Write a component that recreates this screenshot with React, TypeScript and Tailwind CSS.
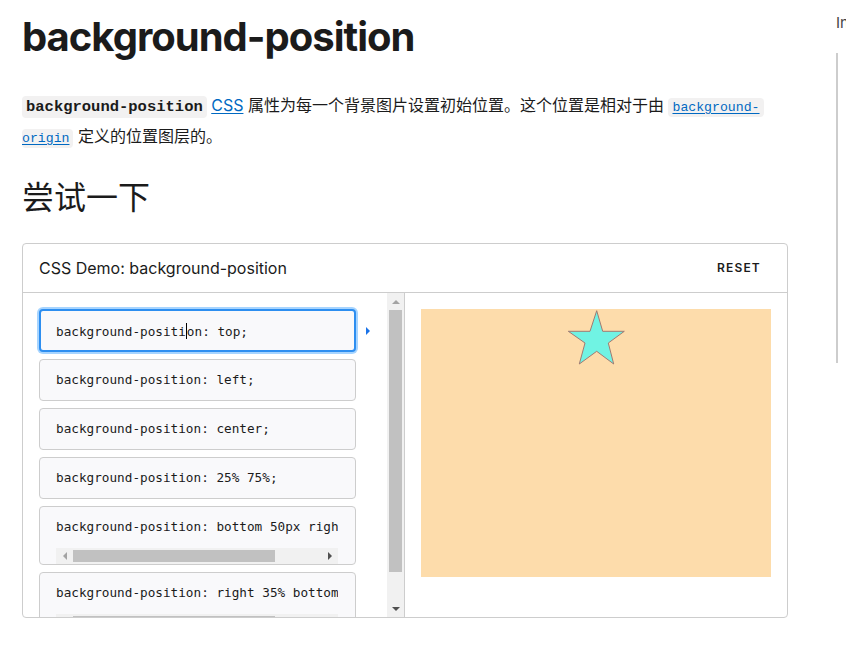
const items = [
  "background-position: top;",
  "background-position: left;",
  "background-position: center;",
  "background-position: 25% 75%;",
  "background-position: bottom 50px right 100px;",
  "background-position: right 35% bottom 45%;",
];

const mono = "font-['DejaVu_Sans_Mono',monospace]";

function Star() {
  return (
    <svg width="60" height="58" viewBox="145 2 60 58" className="block">
      <polygon
        points="175.7,3.7 181.7,24.3 203.3,24.3 187.3,36 192.7,57 175.7,44.3 158.3,57 164,36 147.3,24.3 169,24.3"
        fill="#70f3e3"
        stroke="#a07a72"
        strokeWidth="1"
        strokeLinejoin="miter"
      />
    </svg>
  );
}

function HScrollbar() {
  return (
    <div className="mt-[12px] flex h-[16px] w-[282px] items-center bg-[#f1f1f1]">
      <div className="flex w-[17px] justify-center">
        <div className="h-0 w-0 border-y-[4px] border-r-[4px] border-y-transparent border-r-[#a3a3a3]" />
      </div>
      <div className="h-[12px] w-[202px] bg-[#c1c1c1]" />
      <div className="flex-1" />
      <div className="flex w-[17px] justify-center">
        <div className="h-0 w-0 border-y-[4px] border-l-[4px] border-y-transparent border-l-[#505050]" />
      </div>
    </div>
  );
}

function EditorItem({ code, index }: { code: string; index: number }) {
  const active = index === 0;
  const wide = index >= 4;

  if (active) {
    return (
      <div className="flex h-[43px] w-[317px] items-center rounded-[4px] border-2 border-[#2d8ef0] bg-[#f9f9fb] pl-[15px] ring-2 ring-[#a6d4ff]">
        <span className={`${mono} whitespace-pre text-[12.7px] text-[#1b1b1b]`}>
          background-positi
          <span className="inline-block h-[16px] w-px translate-y-[3px] bg-black align-baseline" />
          on: top;
        </span>
      </div>
    );
  }

  if (wide) {
    return (
      <div className="w-[317px] overflow-hidden rounded-[4px] border border-[#cdcdcd] bg-[#f9f9fb] pl-[16px] pt-[11px]">
        <div className={`${mono} h-[18px] w-[282px] overflow-hidden whitespace-pre text-[12.7px] leading-[18px] text-[#1b1b1b]`}>
          {code}
        </div>
        <HScrollbar />
      </div>
    );
  }

  return (
    <div className="flex h-[42px] w-[317px] items-center rounded-[4px] border border-[#cdcdcd] bg-[#f9f9fb] pl-[16px]">
      <span className={`${mono} whitespace-pre text-[12.7px] text-[#1b1b1b]`}>{code}</span>
    </div>
  );
}

function VScrollbar() {
  return (
    <div className="flex h-full w-[17px] shrink-0 flex-col items-center bg-[#f1f1f1]">
      <div className="flex h-[17px] items-center justify-center">
        <div className="h-0 w-0 border-x-[4px] border-b-[4px] border-x-transparent border-b-[#a3a3a3]" />
      </div>
      <div className="h-[262px] w-[13px] bg-[#c1c1c1]" />
      <div className="flex-1" />
      <div className="flex h-[17px] items-center justify-center">
        <div className="h-0 w-0 border-x-[4px] border-t-[4px] border-x-transparent border-t-[#505050]" />
      </div>
    </div>
  );
}

export default function App() {
  return (
    <div className="flex h-[653px] w-[846px] overflow-hidden bg-white font-['Inter','Noto_Sans_CJK_SC',sans-serif] text-[#1b1b1b]">
      <main className="w-[788px] shrink-0 pl-[22px]">
        <h1 className="mt-[13px] text-[40px] font-bold leading-[48px] tracking-[-1px]">
          background-position
        </h1>

        <p className="mt-[30px] text-[16px] leading-[28px]">
          <code className="rounded-[4px] bg-[#f2f1f1] px-[4px] py-[2px] font-['Liberation_Mono',monospace] text-[15.5px] font-bold">
            background-position
          </code>{" "}
          <a className="text-[#0069c2] underline underline-offset-2">CSS</a>{" "}
          属性为每一个背景图片设置初始位置。这个位置是相对于由{" "}
          <a className="text-[#0069c2] underline underline-offset-2">
            <code className="rounded-[4px] bg-[#f2f1f1] px-[4px] py-[2px] font-['Liberation_Mono',monospace] text-[13.2px]">
              background-
            </code>
            <br />
            <code className="rounded-[4px] bg-[#f2f1f1] py-[2px] pr-[4px] font-['Liberation_Mono',monospace] text-[13.2px]">
              origin
            </code>
          </a>{" "}
          定义的位置图层的。
        </p>

        <h2 className="mt-[26px] text-[32px] font-normal leading-[38px]">尝试一下</h2>

        <section className="mt-[26px] w-[766px] overflow-hidden rounded-[4px] border border-[#cdcdcd]">
          <header className="flex h-[49px] items-center justify-between border-b border-[#cdcdcd] pl-[16px] pr-[26px]">
            <span className="text-[16px] text-[#1b1b1b]">CSS Demo: background-position</span>
            <span className="text-[12px] font-semibold tracking-[1.2px] text-[#1b1b1b]">RESET</span>
          </header>

          <div className="flex h-[324px]">
            <div className="flex w-[382px] shrink-0 border-r border-[#cdcdcd]">
              <div className="flex-1 overflow-hidden pl-[16px] pt-[16px]">
                <div className="flex flex-col gap-[7px]">
                  {items.map((code, i) => (
                    <div key={code} className="flex items-center">
                      <EditorItem code={code} index={i} />
                      {i === 0 && (
                        <div className="ml-[10px] h-0 w-0 border-y-[4px] border-l-[4px] border-y-transparent border-l-[#1a73e8]" />
                      )}
                    </div>
                  ))}
                </div>
              </div>
              <VScrollbar />
            </div>

            <div className="flex-1 p-[16px]">
              <div className="flex h-[268px] w-[350px] justify-center bg-[#fddcab]">
                <Star />
              </div>
            </div>
          </div>
        </section>
      </main>

      <aside className="ml-[48px] w-[200px] shrink-0 pt-[12px]">
        <div className="whitespace-nowrap text-[15px] text-[#444]">In this article</div>
        <div className="mt-[18px] h-[310px] w-[2px] bg-[#cdcdcd]" />
      </aside>
    </div>
  );
}
